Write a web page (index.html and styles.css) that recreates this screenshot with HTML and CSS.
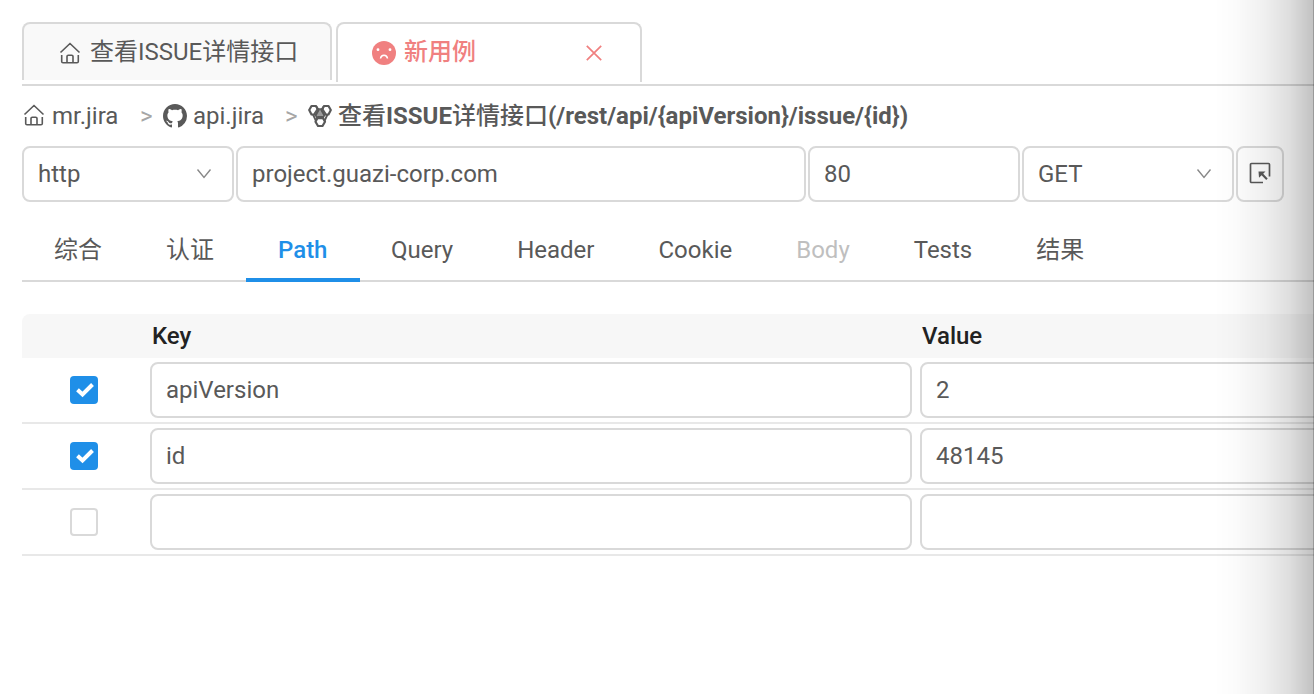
FILE: index.html
```html
<!DOCTYPE html>
<html lang="zh-CN">
<head>
<meta charset="utf-8">
<title>API</title>
<link rel="stylesheet" href="styles.css">
</head>
<body>
<svg width="0" height="0" class="defs">
  <symbol id="home" viewBox="0 0 22 24"><path d="M1.500 11.500 11 2.500l9.500 9M2.700 14v6.500a1.300 1.300 0 0 0 1.300 1.300h14a1.300 1.300 0 0 0 1.300-1.300V14M8 21.500v-6a1.300 1.300 0 0 1 1.300-1.300h3.400a1.300 1.300 0 0 1 1.300 1.300v6" fill="none" stroke="currentColor" stroke-width="1.600"/></symbol>
  <symbol id="down" viewBox="0 0 16 12"><path d="M1.500 1.500 8 9.500l6.500-8" fill="none" stroke="currentColor" stroke-width="1.400"/></symbol>
</svg>
<div class="page">
  <div class="cases">
    <div class="case"><svg class="i-home"><use href="#home"/></svg><span class="t-case">查看ISSUE详情接口</span></div>
    <div class="case case-active">
      <svg class="i-face" viewBox="0 0 24 24"><circle cx="12" cy="12" r="12" fill="currentColor"/><circle cx="6" cy="8.700" r="1.400" fill="#fff"/><circle cx="18" cy="8.700" r="1.400" fill="#fff"/><path d="M8.500 17.500c.6-4.300 6.400-4.300 7 0" fill="none" stroke="#fff" stroke-width="1.500"/></svg>
      <span class="t-new">新用例</span>
      <svg class="i-close" viewBox="0 0 16 16"><path d="M.8.8l14.400 14.400M15.200.8.8 15.200" stroke="currentColor" stroke-width="1.700"/></svg>
    </div>
  </div>
  <div class="crumbs">
    <svg class="i-home"><use href="#home"/></svg><span class="c1">mr.jira</span><span class="sep">&gt;</span>
    <svg class="i-git" viewBox="0 0 16 16"><path fill="currentColor" d="M8 0C3.580 0 0 3.580 0 8c0 3.540 2.290 6.530 5.470 7.590.4.070.55-.17.55-.38 0-.19-.01-.82-.01-1.490-2.010.37-2.530-.49-2.690-.94-.09-.23-.48-.94-.82-1.130-.28-.15-.68-.52-.01-.53.63-.01 1.080.58 1.230.82.72 1.210 1.870.87 2.330.66.07-.52.28-.87.51-1.070-1.780-.2-3.640-.89-3.640-3.950 0-.87.31-1.590.82-2.150-.08-.2-.36-1.020.08-2.120 0 0 .67-.21 2.200.82.64-.18 1.320-.27 2-.27s1.360.09 2 .27c1.530-1.040 2.200-.82 2.200-.82.44 1.100.16 1.920.08 2.120.51.56.82 1.270.82 2.150 0 3.070-1.870 3.750-3.650 3.950.29.25.54.73.54 1.480 0 1.070-.01 1.930-.01 2.200 0 .21.15.46.55.38A8.010 8.010 0 0 0 16 8c0-4.420-3.580-8-8-8z"/></svg>
    <span class="c2">api.jira</span><span class="sep sep2">&gt;</span>
    <svg class="i-api" viewBox="0 0 24 24" fill="none" stroke="currentColor" stroke-width="2.200" stroke-linejoin="round"><path d="M3.500 2h4.500l2.500 4-2.500 4.500h-4.500L1.200 6zM16 2h4.500l2.300 4-2.300 4.500h-4.500L13.500 6zM10 13h4.500l2.500 4.700-2.500 4.300h-4.500L7.500 17.700z"/><path d="M9.500 5h5l3 4.500-3 5h-5l-3-5z" fill="currentColor" fill-opacity=".6" stroke-width="1.600"/><path d="M9.500 5 8 2M14.500 5 16 2M5 10.500 8 17M19.500 10.500 16.500 17" stroke-width="1.800"/></svg>
    <b class="c3"><span>查看</span>ISSUE<span>详情接口</span>(/rest/api/{apiVersion}/issue/{id})</b>
  </div>
  <div class="request">
    <div class="field select">http<svg><use href="#down"/></svg></div>
    <div class="field host">project.guazi-corp.com</div>
    <div class="field">80</div>
    <div class="field select">GET<svg><use href="#down"/></svg></div>
    <div class="field pick"><svg viewBox="0 0 22 22"><path d="M14 20.500H2.500a1 1 0 0 1-1-1v-17a1 1 0 0 1 1-1h17a1 1 0 0 1 1 1V14.500" fill="none" stroke="currentColor" stroke-width="1.700"/><path d="M9.500 9.500h7l-2.300 2.300 4.500 4.700-1.500 1.500-4.600-4.700-2.600 2.500z" fill="currentColor"/></svg></div>
  </div>
  <nav class="tabs">
    <a>综合</a><a>认证</a><a class="on">Path</a><a>Query</a><a>Header</a><a>Cookie</a><a class="off">Body</a><a>Tests</a><a>结果</a>
  </nav>
  <div class="table">
    <div class="head"><span>Key</span><span>Value</span></div>
    <div class="row"><i class="box checked"><svg viewBox="0 0 28 28"><path d="m7.500 13.800 5 4.700 10-10" fill="none" stroke="#fff" stroke-width="4"/></svg></i><div class="field">apiVersion</div><div class="field">2</div></div>
    <div class="row"><i class="box checked"><svg viewBox="0 0 28 28"><path d="m7.500 13.800 5 4.700 10-10" fill="none" stroke="#fff" stroke-width="4"/></svg></i><div class="field">id</div><div class="field">48145</div></div>
    <div class="row"><i class="box"></i><div class="field"></div><div class="field"></div></div>
  </div>
  <div class="shade"></div>
</div>
</body>
</html>
```
FILE: styles.css
```css
* { box-sizing: border-box; }
body { margin: 0; background: #fff; color: #595959; font: 24px/36px Roboto, "Noto Sans CJK SC", sans-serif; }
svg { display: block; flex: none; }
.defs { position: absolute; }
.page { position: relative; width: 1314px; height: 694px; overflow: hidden; padding: 22px 0 0 22px; white-space: nowrap; }
.cases { display: flex; align-items: flex-start; gap: 4px; height: 64px; border-bottom: 2px solid #d9d9d9; }
.case { display: flex; align-items: center; width: 310px; height: 58px; padding-left: 35px; border: 2px solid #d9d9d9; border-bottom: 0; border-radius: 8px 8px 0 0; background: #f9f9f9; }
.case-active { width: 306px; height: 60px; padding-left: 34px; background: #fff; color: #f08080; }
.i-home { width: 22px; height: 24px; margin-top: 1px; }
.t-case { margin-left: 9px; }
.i-face { width: 24px; height: 24px; }
.t-new { margin-left: 8px; padding-bottom: 2px; font-weight: 500; }
.i-close { width: 16px; height: 16px; margin-left: 110px; }
.crumbs { display: flex; align-items: center; height: 60px; padding-left: 1px; }
.crumbs .i-home { margin-top: -2px; }
.c1 { margin-left: 7px; width: 88px; }
.sep { color: #a6a6a6; width: 23px; font-size: 24px; }
.i-git { width: 24px; height: 24px; }
.c2 { margin-left: 6px; width: 92px; }
.i-api { width: 24px; height: 24px; margin-top: -1px; }
.c3 { margin-left: 6px; }
.c3 span { font-weight: 500; }
.request { display: grid; grid-template-columns: 212px 570px 212px 212px 48px; gap: 2px; }
.field { display: flex; align-items: center; height: 56px; padding: 0 14px; border: 2px solid #d9d9d9; border-radius: 8px; background: #fff; }
.select { justify-content: space-between; padding-right: 20px; }
.select svg { width: 16px; height: 12px; color: #888; }
.pick { justify-content: center; padding: 0 0 2px; }
.pick svg { width: 22px; height: 22px; }
.tabs { display: flex; height: 80px; border-bottom: 2px solid #d9d9d9; }
.tabs a { height: 80px; padding: 30px 32px 0; }
.tabs .on { width: 114px; margin-right: -1px; color: #1f8fe8; border-bottom: 4px solid #1f8fe8; font-weight: 500; }
.tabs .off { color: #bfbfbf; }
.table { margin-top: 32px; }
.head { display: grid; grid-template-columns: 770px 1fr; height: 44px; padding-left: 130px; background: #f7f7f7; border-radius: 8px 0 0; color: #222; font-weight: 500; line-height: 45px; }
.row { display: grid; grid-template-columns: 128px 762px 470px; column-gap: 0; height: 66px; padding-top: 4px; border-bottom: 2px solid #e8e8e8; }
.row .field:last-child { margin-left: 8px; }
.box { width: 28px; height: 28px; margin: 14px 0 0 48px; border: 2px solid #d9d9d9; border-radius: 4px; }
.checked { border: 0; background: #1f8fe8; }
.shade { position: absolute; inset: 0 0 0 auto; width: 100px; background: linear-gradient(90deg, rgba(0,0,0,0), rgba(0,0,0,.015) 22%, rgba(0,0,0,.06) 50%, rgba(0,0,0,.13) 76%, rgba(0,0,0,.24)); border-right: 1px solid rgba(0,0,0,.4); }
```
